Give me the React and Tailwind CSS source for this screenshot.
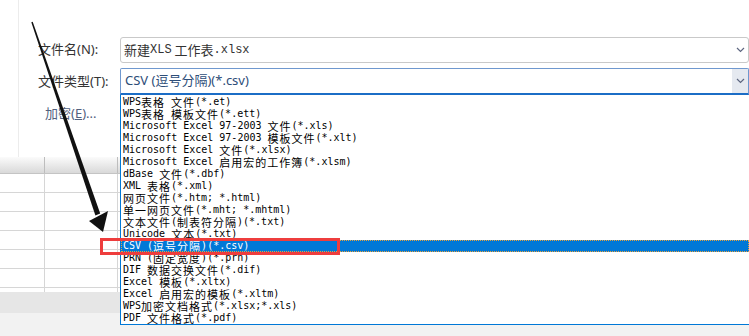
import React from "react";

const CJK = /([\u2E80-\u9FFF\uFF00-\uFFEF]+)/;
const IS_CJK = /^[\u2E80-\u9FFF\uFF00-\uFFEF]+$/;

const items = [
  "WPS表格 文件(*.et)",
  "WPS表格 模板文件(*.ett)",
  "Microsoft Excel 97-2003 文件(*.xls)",
  "Microsoft Excel 97-2003 模板文件(*.xlt)",
  "Microsoft Excel 文件(*.xlsx)",
  "Microsoft Excel 启用宏的工作簿(*.xlsm)",
  "dBase 文件(*.dbf)",
  "XML 表格(*.xml)",
  "网页文件(*.htm; *.html)",
  "单一网页文件(*.mht; *.mhtml)",
  "文本文件(制表符分隔)(*.txt)",
  "Unicode 文本(*.txt)",
  "CSV (逗号分隔)(*.csv)",
  "PRN (固定宽度)(*.prn)",
  "DIF 数据交换文件(*.dif)",
  "Excel 模板(*.xltx)",
  "Excel 启用宏的模板(*.xltm)",
  "WPS加密文档格式(*.xlsx;*.xls)",
  "PDF 文件格式(*.pdf)",
];

// list font: half width latin 6px, cjk 12px (like SimSun 12)
function Mixed({ text }) {
  return text.split(CJK).map((part, i) =>
    IS_CJK.test(part) ? (
      <span key={i} className="h-[12px] leading-[12px] text-[11px] tracking-[1px] font-['Noto_Sans_CJK_SC',sans-serif]">
        {part}
      </span>
    ) : (
      <span key={i} className="h-[12px] leading-[12px] text-[10px] font-['DejaVu_Sans_Mono',monospace]">
        {part}
      </span>
    )
  );
}

function Chevron() {
  return (
    <svg width="9" height="6" viewBox="0 0 9 6">
      <path d="M1 1 L4.5 4.5 L8 1" fill="none" stroke="#5d6680" strokeWidth="1.2" />
    </svg>
  );
}

export default function App() {
  const ui = "font-['Noto_Sans','Noto_Sans_CJK_SC',sans-serif] text-[13px]";

  return (
    <div className="relative w-[749px] h-[336px] overflow-hidden bg-white flex">
      {/* left side: dialog labels + sheet behind */}
      <div className="w-[120px] shrink-0 flex flex-col">
        <div className={`h-[157px] ml-[18px] border-l border-[#ececec] pt-[37px] pl-[19px] text-[#333] ${ui}`}>
          <div className="h-[26px] flex items-center whitespace-nowrap">文件名(N):</div>
          <div className="mt-[5px] h-[27px] flex items-center whitespace-nowrap">文件类型(T):</div>
          <div className="mt-[9px] pl-[7px] text-[#52617e] whitespace-nowrap">
            加密(<span className="underline">E</span>)...
          </div>
        </div>

        <div className="h-[17px] flex border-b border-[#c4c4c4] bg-linear-to-b from-[#fbfbfb] to-[#d9d9d9]">
          <div className="w-[45px] border-r border-[#bdbdbd]" />
          <div className="w-[73px] border-r border-[#bdbdbd]" />
        </div>
        {[0, 1, 2, 3, 4, 5].map((r) => (
          <div key={r} className="h-[19px] flex border-b border-[#d6d6d6]">
            <div className="w-[45px] border-r border-[#d6d6d6]" />
            <div className="w-[73px] border-r border-[#d6d6d6]" />
          </div>
        ))}
        <div className="h-[4px] flex">
          <div className="w-[45px] border-r border-[#d6d6d6]" />
          <div className="w-[73px] border-r border-[#d6d6d6]" />
        </div>
        <div className="h-[21px] bg-[#e6e6e6]" />
        <div className="flex-1 bg-[#f2f2f2]" />
      </div>

      {/* right side: inputs + open dropdown */}
      <div className="flex-1 flex flex-col pt-[37px]">
        <div className="h-[26px] flex items-center border border-[#c9c9c9] rounded-[3px] pl-[3px] text-[#333]">
          <div className="flex-1 flex items-center whitespace-pre">
            <span className="leading-[16px] text-[13px] font-['Noto_Sans_CJK_SC',sans-serif]">新建</span>
            <span className="leading-[16px] text-[12px] font-['Liberation_Mono',monospace]">XLS</span>
            <span className="leading-[16px] text-[13px] font-['Noto_Sans_CJK_SC',sans-serif]"> 工作表</span>
            <span className="leading-[16px] text-[12px] font-['Liberation_Mono',monospace]">.xlsx</span>
          </div>
          <div className="w-[16px] flex items-center justify-center">
            <Chevron />
          </div>
        </div>

        <div className="mt-[5px] h-[27px] flex items-stretch border border-[#6f98cf] border-b-2 border-b-[#1b6dc6] rounded-t-[2px]">
          <div className={`flex-1 flex items-center pl-[4px] text-[#2d4d78] whitespace-nowrap ${ui}`}>
            CSV (逗号分隔)(*.csv)
          </div>
          <div className="w-[16px] flex items-center justify-center bg-[#e5e9f0]">
            <Chevron />
          </div>
        </div>

        <div className="h-[230px] pt-[1px] border-l border-b border-[#0078d7] bg-white text-black">
          {items.map((t, i) =>
            i === 12 ? (
              <div
                key={i}
                className="h-[12px] flex items-center overflow-hidden whitespace-pre pl-[1px] bg-[#0078d7] text-white border border-dotted border-[#e8a23c]"
              >
                <Mixed text={t} />
              </div>
            ) : (
              <div key={i} className="h-[12px] flex items-center overflow-hidden whitespace-pre pl-[2px]">
                <Mixed text={t} />
              </div>
            )
          )}
        </div>
        <div className="flex-1 bg-[#f2f2f2]" />
      </div>

      {/* annotation: red box */}
      <div className="absolute left-[100px] top-[238px] w-[240px] h-[17px] border-[3px] border-[#ee3d3d]" />

      {/* annotation: arrow */}
      <svg className="absolute left-0 top-0 pointer-events-none" width="749" height="336" viewBox="0 0 749 336">
        <polygon points="31.3,22.2 32.7,21.8 100.2,213.6 95.4,215.4" fill="#111" />
        <polygon points="89,221 108,211 103,232" fill="#111" />
      </svg>
    </div>
  );
}
